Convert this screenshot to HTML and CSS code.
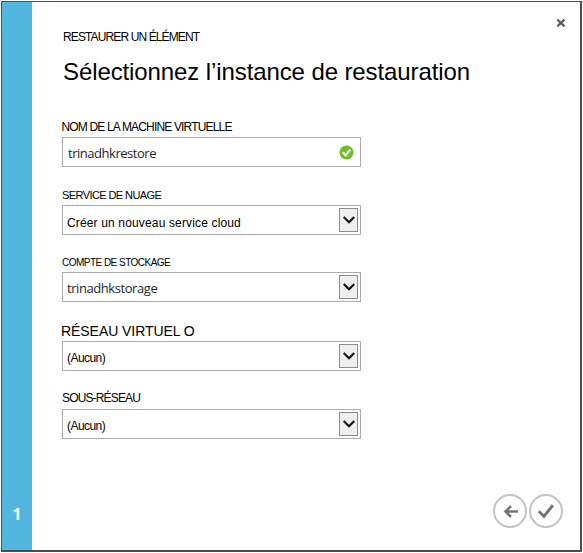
FILE: index.html
```html
<!DOCTYPE html>
<html lang="fr">
<head>
<meta charset="utf-8">
<title>Restaurer un élément</title>
<link rel="stylesheet" href="styles.css">
</head>
<body>
<main class="dialog">
  <aside class="rail"><span class="step">1</span></aside>
  <section class="content">
    <button class="close" aria-label="Fermer"><svg width="10" height="10" viewBox="0 0 10 10"><path d="M1.3 1.5 8.5 8.3M8.5 1.5 1.3 8.3"/></svg></button>
    <header class="header">
      <p class="eyebrow">RESTAURER UN ÉLÉMENT</p>
      <h1 class="title">Sélectionnez l’instance de restauration</h1>
    </header>
    <form class="form">
      <div class="field f-name">
        <label class="label">NOM DE LA MACHINE VIRTUELLE</label>
        <div class="box"><span class="value typed">trinadhkrestore</span>
          <svg class="valid" width="15" height="15" viewBox="0 0 15 15"><circle cx="7.5" cy="7.5" r="7"/><path d="M3.7 7.3 6.7 10.3 11.3 4.6"/></svg></div>
      </div>
      <div class="field f-cloud">
        <label class="label">SERVICE DE NUAGE</label>
        <div class="box"><span class="value">Créer un nouveau service cloud</span><span class="drop"><svg width="12" height="8" viewBox="0 0 12 8"><path d="M.7 1 6 6.2 11.3 1"/></svg></span></div>
      </div>
      <div class="field f-storage">
        <label class="label">COMPTE DE STOCKAGE</label>
        <div class="box"><span class="value typed">trinadhkstorage</span><span class="drop"><svg width="12" height="8" viewBox="0 0 12 8"><path d="M.7 1 6 6.2 11.3 1"/></svg></span></div>
      </div>
      <div class="field f-network">
        <label class="label">RÉSEAU VIRTUEL O</label>
        <div class="box"><span class="value none">(Aucun)</span><span class="drop"><svg width="12" height="8" viewBox="0 0 12 8"><path d="M.7 1 6 6.2 11.3 1"/></svg></span></div>
      </div>
      <div class="field f-subnet">
        <label class="label">SOUS-RÉSEAU</label>
        <div class="box"><span class="value none">(Aucun)</span><span class="drop"><svg width="12" height="8" viewBox="0 0 12 8"><path d="M.7 1 6 6.2 11.3 1"/></svg></span></div>
      </div>
    </form>
    <footer class="actions">
      <svg width="34" height="34" viewBox="0 0 34 34"><circle cx="17" cy="17" r="16"/><path class="arrow" d="M25 17.5H12.500M18 12 12.500 17.500 18 23"/></svg>
      <svg width="34" height="34" viewBox="0 0 34 34"><circle cx="17" cy="17" r="16"/><path class="tick" d="M9.8 17.2 15 22.3 23.8 11.3"/></svg>
    </footer>
  </section>
</main>
</body>
</html>
```
FILE: styles.css
```css
* { box-sizing: border-box; }
body {
  margin: 0;
  padding: 1px 0 0 1px;
  background: #fff;
  color: #000;
  font-family: "Liberation Sans", Arial, sans-serif;
  overflow: hidden;
}
.dialog {
  display: flex;
  width: 581px;
  height: 551px;
  border: solid #4d4d4f;
  border-width: 1px 2px 2px 1px;
}
.rail {
  display: flex;
  align-items: flex-end;
  justify-content: center;
  width: 30px;
  padding-bottom: 26px;
  background: #52b6e0;
}
.step { color: #fff; font: bold 15.5px/20px "Open Sans", sans-serif; }
.content { position: relative; flex: 1; display: flex; flex-direction: column; padding: 0 17px 0 30px; }
.close { position: absolute; top: 16px; right: 14px; width: 10px; height: 10px; padding: 0; border: 0; background: none; }
.close svg { display: block; fill: none; stroke: #5c5c5c; stroke-width: 2.3; }
.header { height: 117px; padding: 27px 0 0 1px; }
.eyebrow { margin: 0; font-size: 12px; line-height: 16px; letter-spacing: -0.88px; }
.title { margin: 14px 0 0; font-size: 24px; line-height: 26px; font-weight: 400; letter-spacing: -0.1px; white-space: nowrap; }
.field { width: 299px; }
.label { display: block; height: 17px; line-height: 16px; font-size: 12px; white-space: nowrap; }
.box { display: flex; align-items: center; justify-content: space-between; height: 30px; padding: 0 2px 0 4px; border: 1px solid #ababab; }
.value { font-size: 12px; line-height: 16px; padding-top: 6px; letter-spacing: 0.15px; white-space: nowrap; }
.typed { font: 13px/16px "Open Sans", sans-serif; letter-spacing: -0.47px; color: #262626; padding: 1px 0 0 1px; }
.f-storage .typed { padding-left: 0; letter-spacing: -0.43px; }
.none { padding-top: 3px; letter-spacing: -0.55px; }
.valid { margin-right: 4px; }
.valid circle { fill: #6abf27; }
.valid path { fill: none; stroke: #fff; stroke-width: 2.2; }
.drop { display: flex; align-items: center; justify-content: center; width: 19px; height: 24px; border: 1px solid #8b8b8b; background: #efefef; }
.drop path { fill: none; stroke: #111; stroke-width: 2.2; }
.f-name .label { height: 18px; margin-left: -0.5px; letter-spacing: -0.83px; }
.f-cloud { margin-top: 20px; }
.f-cloud .label { height: 18px; font-size: 11px; letter-spacing: -0.58px; }
.f-storage { margin-top: 20px; }
.f-storage .label { font-size: 10px; letter-spacing: -0.52px; }
.f-network { margin-top: 20px; }
.f-network .label { height: 19px; margin-left: -1px; line-height: 18px; font-size: 14px; letter-spacing: -0.06px; }
.f-subnet { margin-top: 19px; }
.f-subnet .label { height: 19px; letter-spacing: -0.85px; }
.actions { display: flex; justify-content: flex-end; gap: 2px; margin-top: auto; padding-bottom: 22px; }
.actions circle { fill: #fff; stroke: #c3c3c3; stroke-width: 2; }
.actions path { fill: none; stroke: #757575; stroke-width: 2.6; }
.actions .tick { stroke-width: 3; }
```
